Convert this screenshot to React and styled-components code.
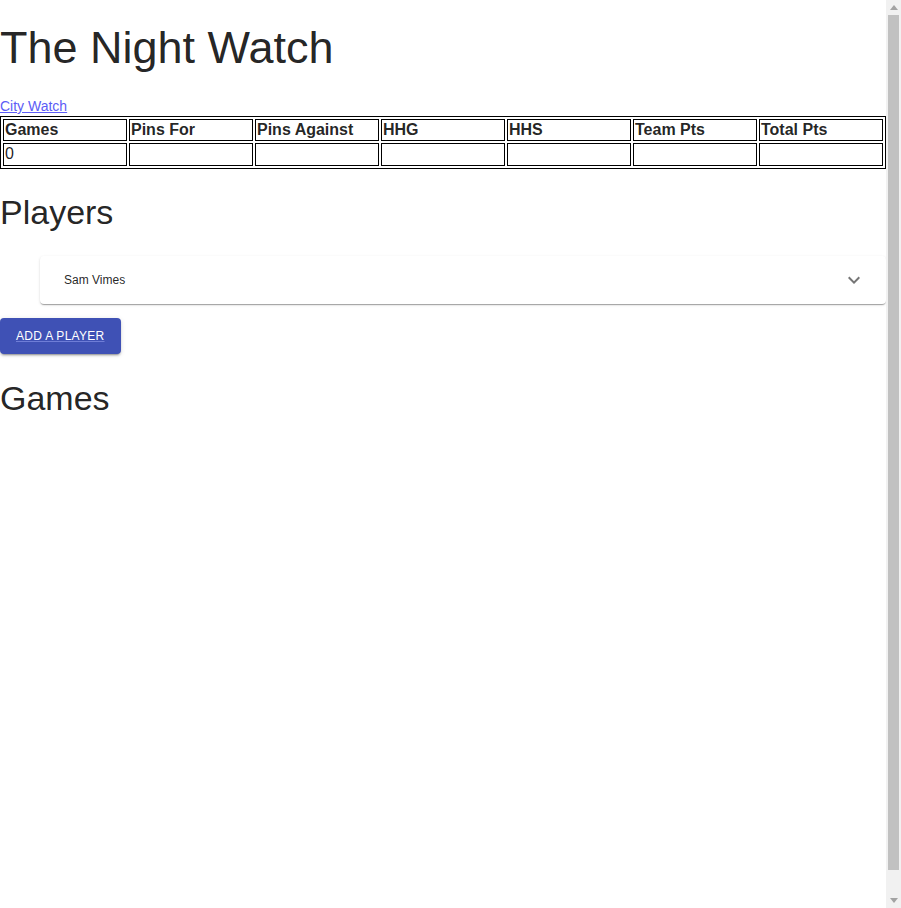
import React from "react";
import styled, { createGlobalStyle } from "styled-components";

const Global = createGlobalStyle`
  html, body { margin: 0; padding: 0; background: #fff; }
  body {
    font-family: "Liberation Sans", Arial, sans-serif;
    color: rgba(0, 0, 0, 0.87);
    font-size: 14px;
    line-height: 1.43;
  }
`;

const Page = styled.div`
  margin-right: 15px;
  min-height: 908px;
  padding-top: 1px;
`;

const Title = styled.h1`
  margin: 21.44px 0;
  font-size: 45px;
  font-weight: 400;
  line-height: 52px;
`;

const TeamLink = styled.a`
  display: block;
  font-size: 14px;
  line-height: 20px;
  color: #5c5cf6;
  text-decoration: underline;
`;

const StatsTable = styled.table`
  width: 100%;
  table-layout: fixed;
  border: 1px solid #000;
  border-spacing: 2px;
  font-size: 16px;
  line-height: normal;
  color: rgba(0, 0, 0, 0.87);
`;

const Cell = styled.td`
  border: 1px solid #000;
  padding: 1px;
  text-align: left;
  font-weight: ${(p) => (p.$head ? 700 : 400)};
  height: 18.4px;
`;

const SectionTitle = styled.h2`
  margin: 22.78px 0;
  font-size: 34px;
  font-weight: 400;
  line-height: 42px;
`;

const PlayerList = styled.div`
  padding-left: 40px;
`;

const Accordion = styled.div`
  background: #fff;
  border-radius: 4px;
  box-shadow: 0px 2px 1px -1px rgba(0, 0, 0, 0.2),
    0px 1px 1px 0px rgba(0, 0, 0, 0.14), 0px 1px 3px 0px rgba(0, 0, 0, 0.12);
`;

const Summary = styled.div`
  display: flex;
  align-items: center;
  justify-content: space-between;
  min-height: 48px;
  padding: 0 20px 0 24px;
`;

const PlayerName = styled.span`
  font-size: 12px;
  line-height: 1.4;
  color: rgba(0, 0, 0, 0.87);
`;

const Chevron = styled.svg`
  width: 24px;
  height: 24px;
  fill: rgba(0, 0, 0, 0.54);
`;

const AddButton = styled.a`
  display: inline-flex;
  align-items: center;
  justify-content: center;
  margin-top: 14px;
  height: 36px;
  box-sizing: border-box;
  padding: 6px 16px;
  background: #3f51b5;
  color: #fff;
  border-radius: 4px;
  font-size: 12px;
  font-weight: 500;
  letter-spacing: 0.28px;
  text-transform: uppercase;
  text-decoration: underline;
  text-decoration-color: rgba(170, 180, 255, 0.45);
  box-shadow: 0px 3px 1px -2px rgba(0, 0, 0, 0.2),
    0px 2px 2px 0px rgba(0, 0, 0, 0.14), 0px 1px 5px 0px rgba(0, 0, 0, 0.12);
  cursor: pointer;
`;

const Scrollbar = styled.div`
  position: fixed;
  top: 0;
  right: 0;
  width: 15px;
  height: 100vh;
  background: #f1f1f1;
  display: flex;
  flex-direction: column;
`;

const ScrollArrow = styled.div`
  height: 15px;
  display: flex;
  align-items: center;
  justify-content: center;
  svg { width: 8px; height: 5px; fill: #a3a3a3; transform: ${(p) => (p.$down ? "rotate(180deg)" : "none")}; }
`;

const ScrollTrack = styled.div`
  flex: 1;
  padding: 0 2px 23px;
  display: flex;
`;

const Thumb = styled.div`
  flex: 1;
  background: #c1c1c1;
`;

const headers = ["Games", "Pins For", "Pins Against", "HHG", "HHS", "Team Pts", "Total Pts"];
const values = ["0", "", "", "", "", "", ""];

export default function App() {
  return (
    <Page>
      <Global />
      <Title>The Night Watch</Title>
      <TeamLink href="#">City Watch</TeamLink>
      <StatsTable>
        <thead>
          <tr>
            {headers.map((h) => (
              <Cell as="th" $head key={h}>
                {h}
              </Cell>
            ))}
          </tr>
        </thead>
        <tbody>
          <tr>
            {values.map((v, i) => (
              <Cell key={i}>{v}</Cell>
            ))}
          </tr>
        </tbody>
      </StatsTable>
      <SectionTitle>Players</SectionTitle>
      <PlayerList>
        <Accordion>
          <Summary>
            <PlayerName>Sam Vimes</PlayerName>
            <Chevron viewBox="0 0 24 24">
              <path d="M16.59 8.59L12 13.17 7.41 8.59 6 10l6 6 6-6z" />
            </Chevron>
          </Summary>
        </Accordion>
      </PlayerList>
      <AddButton>Add a player</AddButton>
      <SectionTitle>Games</SectionTitle>
      <Scrollbar aria-hidden="true">
        <ScrollArrow>
          <svg viewBox="0 0 8 5"><path d="M0 5L4 0 8 5z" /></svg>
        </ScrollArrow>
        <ScrollTrack>
          <Thumb />
        </ScrollTrack>
        <ScrollArrow $down>
          <svg viewBox="0 0 8 5"><path d="M0 5L4 0 8 5z" /></svg>
        </ScrollArrow>
      </Scrollbar>
    </Page>
  );
}
